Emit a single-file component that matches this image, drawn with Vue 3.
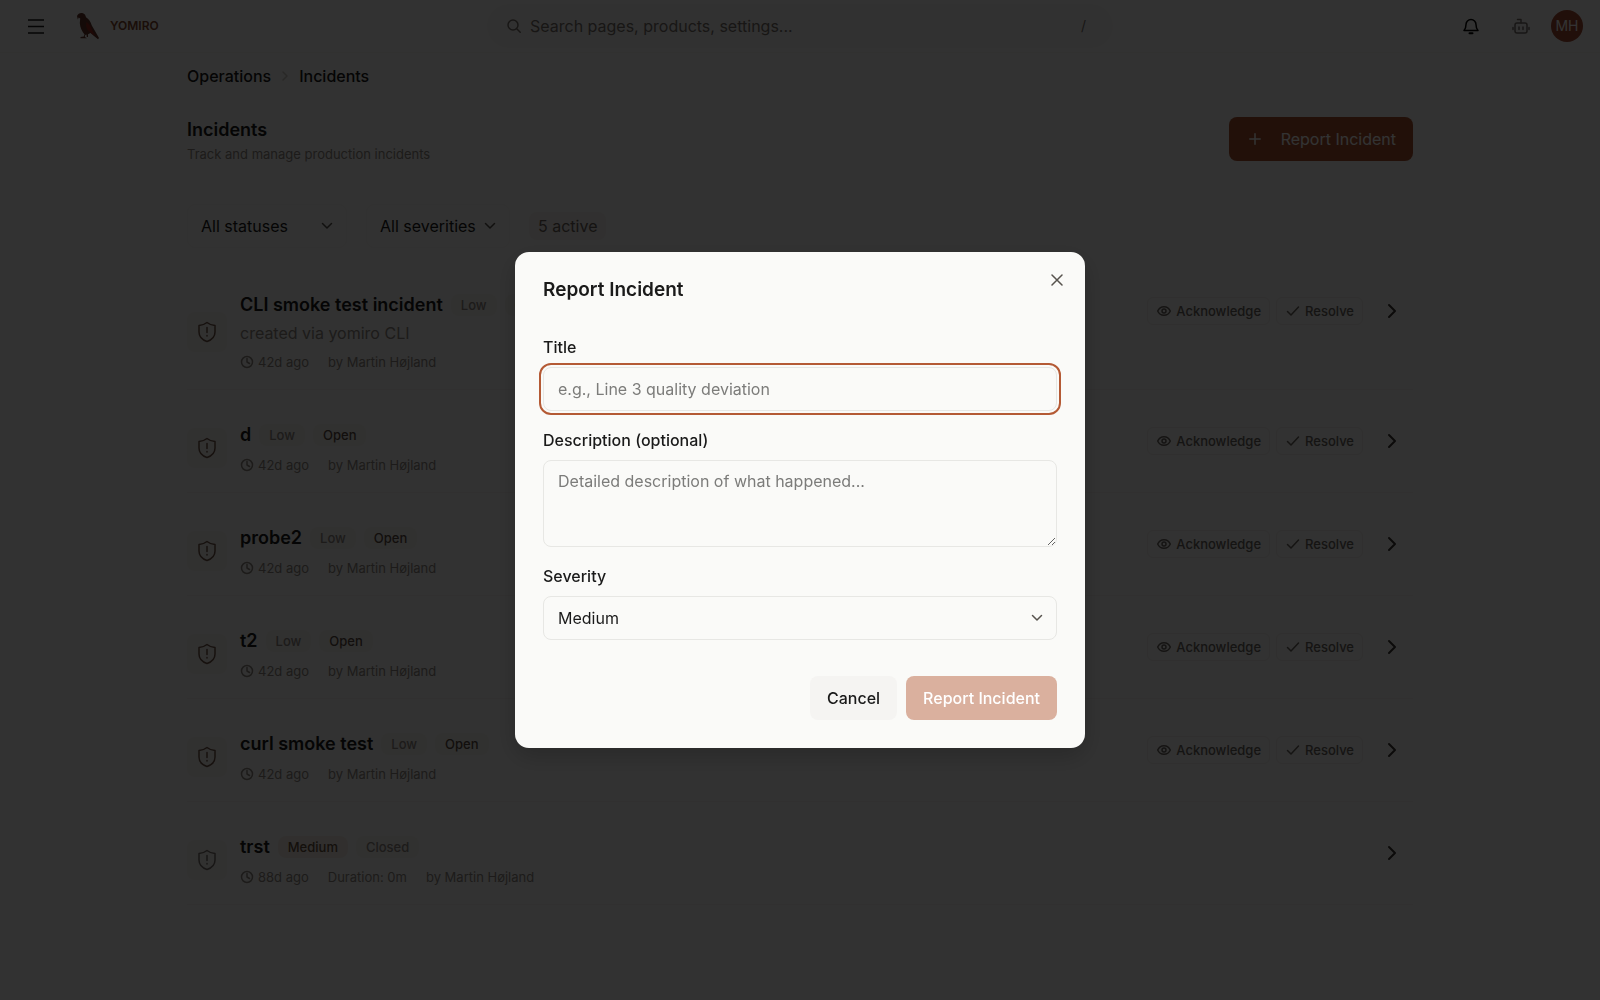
<script setup>
import { ref } from 'vue'

const incidents = [
  { title: 'CLI smoke test incident', description: 'created via yomiro CLI', severity: 'Low', status: 'Open', age: '42d ago', by: 'Martin Højland' },
  { title: 'd', severity: 'Low', status: 'Open', age: '42d ago', by: 'Martin Højland' },
  { title: 'probe2', severity: 'Low', status: 'Open', age: '42d ago', by: 'Martin Højland' },
  { title: 't2', severity: 'Low', status: 'Open', age: '42d ago', by: 'Martin Højland' },
  { title: 'curl smoke test', severity: 'Low', status: 'Open', age: '42d ago', by: 'Martin Højland' },
  { title: 'trst', severity: 'Medium', status: 'Closed', age: '88d ago', duration: 'Duration: 0m', by: 'Martin Højland' },
]

const statusFilter = ref('all')
const severityFilter = ref('all')
const search = ref('')
const title = ref('')
const description = ref('')
const severity = ref('medium')
</script>

<template>
  <div class="app">
    <header class="topbar">
      <div class="topbar-side">
        <button class="icon-btn menu-btn" type="button" aria-label="Menu">
          <svg width="18" height="18" viewBox="0 0 18 18" class="menu"><path d="M1 3h16M1 9.500h16M1 16h16" /></svg>
        </button>
        <a href="#" class="brand">
          <svg width="24" height="28" viewBox="0 0 24 28" class="bird">
            <path class="body" d="M1 4C2 1.500 4.500.5 7 1.300c2 .7 2.500 2 3 4 2.800 1.700 4.600 4.500 5.800 8.200L19 19l4 7-1 1.300-4-3.300-3.500-3-2.500 1.200V25h-1.200l-.3-2.500-1.300.5-.4 2L11 26.200H4.500V25l3.300-.4.7-2C6 19.500 4 15.500 3.800 11l.4-4.500-1.500-1L1.800 7.500z" />
            <path class="wing" d="M10.500 10c2.800 2 4.700 4.500 5.500 8l3.500 6-4-2.500-3.800-3.500c-1.500-2-2-5-1.200-8z" />
          </svg>
          <span>YOMIRO</span>
        </a>
      </div>
      <label class="search">
        <svg width="14" height="14" viewBox="0 0 14 14"><circle cx="6" cy="6" r="5" /><path d="M10 10l3.200 3.200" /></svg>
        <input v-model="search" type="search" placeholder="Search pages, products, settings..." aria-label="Search" />
        <kbd>/</kbd>
      </label>
      <div class="topbar-side end">
        <button class="icon-btn bell" type="button" aria-label="Notifications">
          <svg width="18" height="18" viewBox="0 0 18 18"><path d="M2 13.500c1.300-1.500 2-2.500 2-6a5 5 0 0 1 10 0c0 3.500.7 4.500 2 6z" /><path d="M7.500 16.200h3" class="clapper" /></svg>
        </button>
        <button class="icon-btn bot" type="button" aria-label="Assistant">
          <svg width="18" height="18" viewBox="0 0 18 18"><rect x="3" y="6" width="12" height="10" rx="2" /><path d="M9 6V2.500H5.500M1 10.500v2M17 10.500v2M7 10v2.500M11 10v2.500" /></svg>
        </button>
        <button class="avatar" type="button">MH</button>
      </div>
    </header>

    <main class="page">
      <nav class="crumbs" aria-label="Breadcrumb">
        <a href="#">Operations</a>
        <svg width="8" height="12" viewBox="0 0 8 12"><path d="M2 2l4 4-4 4" /></svg>
        <a href="#">Incidents</a>
      </nav>

      <div class="page-head">
        <div>
          <h1>Incidents</h1>
          <p>Track and manage production incidents</p>
        </div>
        <button class="btn primary add" type="button">
          <svg width="12" height="12" viewBox="0 0 12 12"><path d="M6 .8v10.400M.8 6h10.400" /></svg>
          Report Incident
        </button>
      </div>

      <div class="filters">
        <div class="select status">
          <select v-model="statusFilter" aria-label="Status"><option value="all">All statuses</option><option value="open">Open</option></select>
          <svg width="12" height="8" viewBox="0 0 12 8"><path d="M1.500 1.500L6 6l4.500-4.500" /></svg>
        </div>
        <div class="select sev">
          <select v-model="severityFilter" aria-label="Severity filter"><option value="all">All severities</option><option value="low">Low</option></select>
          <svg width="12" height="8" viewBox="0 0 12 8"><path d="M1.500 1.500L6 6l4.500-4.500" /></svg>
        </div>
        <span class="active-count">5 active</span>
      </div>

      <ul class="list">
        <li v-for="item in incidents" :key="item.title" class="row">
          <div class="summary">
            <span class="shield" :class="{ closed: item.status === 'Closed' }">
              <svg width="20" height="22" viewBox="0 0 20 22"><path d="M10 1.500c2.500 2 5 2.700 8 3v6.500c0 5-3.500 8-8 9.500-4.500-1.500-8-4.500-8-9.500V4.500c3-.3 5.500-1 8-3z" /><path d="M10 6.500v5M10 14.500v.5" /></svg>
            </span>
            <div class="info">
              <div class="title-line">
                <h2>{{ item.title }}</h2>
                <span class="tag" :class="item.severity.toLowerCase()">{{ item.severity }}</span>
                <span class="tag" :class="item.status.toLowerCase()">{{ item.status }}</span>
              </div>
              <p v-if="item.description">{{ item.description }}</p>
              <div class="meta">
                <span class="age">
                  <svg width="14" height="14" viewBox="0 0 14 14"><circle cx="7" cy="7" r="5.500" /><path d="M7 3.500V7l2.500 1.500" /></svg>
                  {{ item.age }}
                </span>
                <span v-if="item.duration">{{ item.duration }}</span>
                <span>by {{ item.by }}</span>
              </div>
            </div>
          </div>
          <div class="actions">
            <template v-if="item.status === 'Open'">
              <button class="small" type="button">
                <svg width="14" height="14" viewBox="0 0 14 14"><path d="M.7 7C2 4 4.300 2.700 7 2.700S12 4 13.300 7C12 10 9.700 11.300 7 11.300S2 10 .7 7z" /><circle cx="7" cy="7" r="2" /></svg>
                Acknowledge
              </button>
              <button class="small" type="button">
                <svg width="14" height="14" viewBox="0 0 14 14"><path d="M1.500 7.500l3.500 3.500L12.500 3" /></svg>
                Resolve
              </button>
            </template>
            <a href="#" class="go" :aria-label="'Open ' + item.title">
              <svg width="10" height="16" viewBox="0 0 10 16"><path d="M2 2l6 6-6 6" /></svg>
            </a>
          </div>
        </li>
      </ul>
    </main>

    <div class="overlay">
      <form class="modal" role="dialog" aria-modal="true" aria-labelledby="modal-title" @submit.prevent>
        <h2 id="modal-title">Report Incident</h2>
        <button class="close" type="button" aria-label="Close">
          <svg width="12" height="12" viewBox="0 0 12 12"><path d="M1 1l10 10M11 1L1 11" /></svg>
        </button>
        <div class="fields">
          <div class="field">
            <label for="incident-title">Title</label>
            <input id="incident-title" v-model="title" class="focused" type="text" placeholder="e.g., Line 3 quality deviation" />
          </div>
          <div class="field">
            <label for="incident-desc">Description (optional)</label>
            <textarea id="incident-desc" v-model="description" placeholder="Detailed description of what happened..."></textarea>
          </div>
          <div class="field">
            <label for="incident-severity">Severity</label>
            <div class="select">
              <select id="incident-severity" v-model="severity"><option value="low">Low</option><option value="medium">Medium</option><option value="high">High</option></select>
              <svg width="12" height="8" viewBox="0 0 12 8"><path d="M1.500 1.500L6 6l4.500-4.500" /></svg>
            </div>
          </div>
        </div>
        <div class="modal-foot">
          <button class="btn ghost" type="button">Cancel</button>
          <button class="btn primary" type="submit" disabled>Report Incident</button>
        </div>
      </form>
    </div>
  </div>
</template>

<style>
body {
  margin: 0;
  background: #fafaf8;
}
</style>

<style scoped>
* {
  box-sizing: border-box;
}
.app {
  min-height: 100vh;
  background: #fafaf8;
  color: #1a1a1a;
  font: 400 16px/24px Inter, "Liberation Sans", sans-serif;
}
button,
input,
textarea,
select {
  font: inherit;
  color: inherit;
}
button {
  margin: 0;
  padding: 0;
  border: 0;
  background: none;
  cursor: pointer;
}
a {
  color: inherit;
  text-decoration: none;
}
h1,
h2,
p,
ul {
  margin: 0;
  padding: 0;
}
svg {
  flex: none;
  fill: none;
  stroke: currentColor;
  stroke-width: 1.5;
  stroke-linecap: round;
  stroke-linejoin: round;
}

/* Top bar */
.topbar {
  display: flex;
  align-items: center;
  height: 53px;
  padding: 0 17px;
  border-bottom: 1px solid #f3f2ef;
}
.topbar-side {
  flex: 1;
  display: flex;
  align-items: center;
}
.topbar-side.end {
  justify-content: flex-end;
}
.icon-btn {
  display: flex;
}
.menu-btn {
  margin-left: 10px;
}
.menu {
  stroke-linecap: butt;
}
.brand {
  display: flex;
  align-items: center;
  gap: 10px;
  margin-left: 31px;
  color: #84492f;
  font-size: 12px;
  font-weight: 600;
}
.bird {
  stroke: none;
}
.bird .body {
  fill: #63352a;
}
.bird .wing {
  fill: #992c20;
}
.search {
  display: flex;
  align-items: center;
  gap: 9px;
  flex: 0 1 626px;
  height: 44px;
  padding: 0 27px 0 20px;
  border-radius: 22px;
  background: #f6f5f3;
  color: #78716c;
}
.search input {
  flex: 1;
  min-width: 0;
  padding: 0;
  border: 0;
  outline: 0;
  background: none;
}
.search input::placeholder {
  color: #78716c;
  opacity: 1;
}
.search kbd {
  font: 14px/20px Inter, sans-serif;
}
.bell {
  margin-right: 32px;
  color: #000;
}
.bell .clapper {
  stroke-width: 2;
}
.bot {
  margin-right: 21px;
  color: #78716c;
}
.avatar {
  width: 32px;
  height: 32px;
  border-radius: 50%;
  background: #a54c34;
  color: #fff;
  font-size: 14px;
}

/* Page */
.page {
  max-width: 1226px;
  margin: 0 auto;
  padding-top: 11px;
}
.crumbs {
  display: flex;
  align-items: center;
  gap: 10px;
  font-weight: 500;
}
.crumbs svg {
  color: #ccc8c3;
}
.page-head {
  display: flex;
  justify-content: space-between;
  align-items: flex-start;
  margin-top: 29px;
}
h1 {
  font-size: 18px;
  line-height: 26px;
  font-weight: 600;
}
.page-head p {
  color: #8f8983;
  font-size: 13px;
  line-height: 22px;
}
.btn {
  display: flex;
  align-items: center;
  justify-content: center;
  height: 44px;
  padding: 0 17px;
  border-radius: 8px;
  font-weight: 500;
}
.primary {
  background: #a85331;
  color: #fff;
}
.primary:disabled {
  background: #dab09e;
}
.add {
  gap: 20px;
  padding-left: 20px;
  font-weight: 400;
}
.filters {
  display: flex;
  align-items: center;
  gap: 19px;
  margin-top: 39px;
}
.select {
  position: relative;
  display: flex;
}
.select select {
  width: 100%;
  height: 44px;
  padding: 0 14px;
  appearance: none;
  border: 1px solid #e7e7e4;
  border-radius: 8px;
  background: #fafaf8;
}
.select svg {
  position: absolute;
  top: 18px;
  right: 14px;
  color: #57534e;
  pointer-events: none;
}
.filters .select select {
  padding: 0 13px;
  border-color: #f5f4f2;
}
.status {
  width: 160px;
}
.sev {
  width: 144px;
}
.active-count {
  padding: 2px 9px;
  border-radius: 8px;
  background: #f3f0ed;
  color: #6b625c;
}

/* Incident rows */
.list {
  margin-top: 12px;
  list-style: none;
}
.row {
  display: flex;
  justify-content: space-between;
  align-items: flex-start;
  padding: 31px 0 17px;
  border-bottom: 1px solid #f2f0ee;
}
.summary {
  display: flex;
  align-items: center;
  gap: 13px;
}
.shield {
  display: grid;
  place-items: center;
  width: 40px;
  height: 40px;
  border-radius: 8px;
  background: #f5f2ef;
  color: #6f5546;
}
.shield.closed {
  color: #78716c;
}
.title-line {
  display: flex;
  align-items: center;
  gap: 8px;
  line-height: 27px;
}
.title-line h2 {
  font-size: 18px;
  font-weight: 600;
}
.tag {
  padding: 0 10px;
  border-radius: 8px;
  background: #f5f3f0;
  font-size: 13px;
  line-height: 22px;
  font-weight: 500;
}
.tag.low,
.tag.closed {
  color: #8f8983;
}
.tag.open {
  color: #5d4e44;
}
.tag.medium {
  background: #f3ece6;
  color: #67503f;
}
.info p {
  margin-top: 3px;
  color: #8f8983;
  line-height: 24px;
}
.meta {
  display: flex;
  gap: 19px;
  margin-top: 7px;
  color: #8f8983;
  font-size: 13px;
  line-height: 20px;
}
.age {
  display: flex;
  align-items: center;
  gap: 4px;
}
.actions {
  display: flex;
  align-items: center;
  gap: 6px;
  margin-top: 6px;
}
.small {
  display: flex;
  align-items: center;
  gap: 5px;
  height: 28px;
  padding: 0 8px 0 9px;
  border: 1px solid #edebe8;
  border-radius: 6px;
  color: #6b6560;
  font-size: 13px;
  font-weight: 500;
}
.go {
  display: flex;
  align-items: center;
  height: 28px;
  padding: 0 16px 0 18px;
  color: #3a3633;
}
.go svg {
  stroke-width: 2;
}

/* Dialog */
.overlay {
  position: fixed;
  inset: 0;
  display: grid;
  place-items: center;
  background: rgba(0, 0, 0, 0.8);
}
.modal {
  position: relative;
  width: 100%;
  max-width: 570px;
  padding: 28px;
  border-radius: 14px;
  background: #fafaf8;
  box-shadow: 0 8px 24px rgba(0, 0, 0, 0.2);
}
.modal h2 {
  font-size: 19px;
  line-height: 20px;
  font-weight: 600;
}
.close {
  position: absolute;
  top: 18px;
  right: 18px;
  display: grid;
  place-items: center;
  width: 20px;
  height: 20px;
  color: #57534e;
}
.fields {
  display: flex;
  flex-direction: column;
  gap: 17px;
  margin-top: 35px;
}
.field {
  display: flex;
  flex-direction: column;
  gap: 8px;
}
.field label {
  font-weight: 500;
}
.field > input,
.field > textarea {
  width: 100%;
  height: 44px;
  padding: 0 14px;
  border: 1px solid #e7e7e4;
  border-radius: 8px;
  background: #fafaf8;
}
.field > textarea {
  height: 87px;
  padding: 8px 14px;
  resize: vertical;
}
.field ::placeholder {
  color: #7c7c7a;
  opacity: 1;
}
.field > .focused {
  outline: 2px solid #b45a35;
  outline-offset: 2px;
}
.modal-foot {
  display: flex;
  justify-content: flex-end;
  gap: 9px;
  margin-top: 36px;
}
.ghost {
  background: #f5f4f2;
}
</style>
